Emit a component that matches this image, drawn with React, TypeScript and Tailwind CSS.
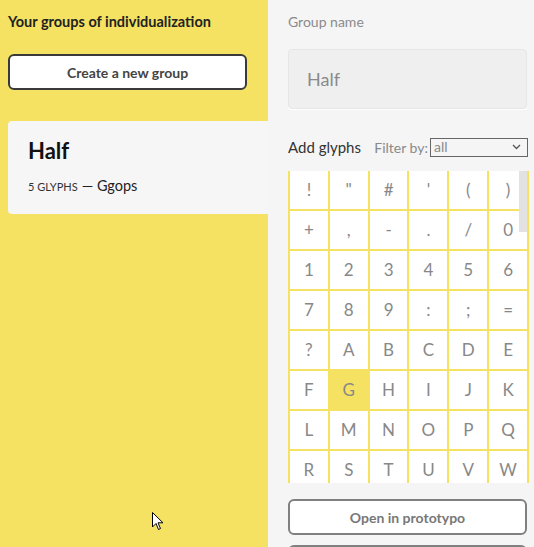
import React from "react";

const glyphs = [
  "!", "\"", "#", "'", "(", ")",
  "+", ",", "-", ".", "/", "0",
  "1", "2", "3", "4", "5", "6",
  "7", "8", "9", ":", ";", "=",
  "?", "A", "B", "C", "D", "E",
  "F", "G", "H", "I", "J", "K",
  "L", "M", "N", "O", "P", "Q",
  "R", "S", "T", "U", "V", "W",
];

export default function App() {
  return (
    <div
      className="relative flex w-[534px] h-[547px] overflow-hidden"
      style={{ fontFamily: "Lato, 'Noto Sans', sans-serif" }}
    >
      {/* Left panel */}
      <div className="w-[268px] shrink-0 bg-[#f5e263] pl-2 pt-[13px]">
        <h2 className="text-[14.5px] leading-[18px] font-bold text-[#222]">
          Your groups of individualization
        </h2>
        <button className="mt-[23px] w-[239px] h-[36px] rounded-[6px] border-2 border-[#3a3a3a] bg-white text-[14px] font-bold text-[#444]">
          Create a new group
        </button>
        <div className="mt-[31px] h-[93px] rounded-l-[4px] bg-[#f6f6f6] pl-5 pt-[16px]">
          <div className="text-[22px] leading-[28px] font-bold text-[#111]">Half</div>
          <div className="mt-[10px] flex items-baseline gap-1 text-[#222]">
            <span className="text-[11px] text-[#333]">5 GLYPHS</span>
            <span className="text-[14.5px]">— Ggops</span>
          </div>
        </div>
      </div>

      {/* Right panel */}
      <div className="flex-1 bg-[#f5f5f5] pl-5 pt-[13px]">
        <div className="text-[14px] leading-[18px] text-[#8a8a8a]">Group name</div>
        <div className="mt-[18px] w-[239px] h-[60px] rounded-[4px] border border-[#e6e6e6] bg-[#efefef] pl-[18px] flex items-center text-[18px] text-[#8a8a8a] shadow-[0_1px_0_#ffffff]">
          Half
        </div>
        <div className="mt-[29px] flex items-center h-[18px] w-[240px]">
          <span className="text-[15px] text-[#333]">Add glyphs</span>
          <div className="ml-auto flex items-center gap-[2px]">
            <span className="text-[14px] text-[#8a8a8a]">Filter by:</span>
            <div className="w-[98px] h-[19px] border border-[#666] bg-[#f5f5f5] flex items-center justify-between pl-[3px] pr-[6px]">
              <span className="text-[14px] leading-none text-[#8a8a8a]">all</span>
              <svg width="9" height="6" viewBox="0 0 9 6">
                <path d="M1 1 L4.5 4.5 L8 1" stroke="#555" strokeWidth="1.3" fill="none" />
              </svg>
            </div>
          </div>
        </div>
        <div className="relative mt-[15px] w-[241px] h-[312px] overflow-hidden">
          <div className="grid grid-cols-6 border-x border-[#f5e263] -mt-[1px]">
            {glyphs.map((g, i) => (
              <div
                key={i}
                className={`h-[40px] flex items-center justify-center border border-[#f5e263] text-[17px] text-[#888] ${
                  g === "G" ? "bg-[#f5e263] text-[#555]" : "bg-white"
                }`}
              >
                {g}
              </div>
            ))}
          </div>
          <div className="absolute right-[2px] top-0 w-[8px] h-[61px] bg-[#e2e2e2]" />
        </div>
        <button className="mt-[16px] w-[239px] h-[36px] rounded-[6px] border-2 border-[#808080] bg-white text-[14px] font-bold text-[#777]">
          Open in prototypo
        </button>
        <button className="mt-[10px] w-[239px] h-[36px] rounded-[6px] border-2 border-[#808080] bg-white text-[14px] font-bold text-[#777]">
          Delete group
        </button>
      </div>

      {/* mouse cursor */}
      <svg
        className="absolute left-[152px] top-[512px]"
        width="13"
        height="20"
        viewBox="0 0 13 20"
      >
        <path
          d="M0.5 0.5 L0.5 15 L4 11.5 L6.5 17.5 L8.5 16.5 L6 10.8 L11 10.8 Z"
          fill="#fff"
          stroke="#000"
          strokeWidth="1"
        />
      </svg>
    </div>
  );
}
